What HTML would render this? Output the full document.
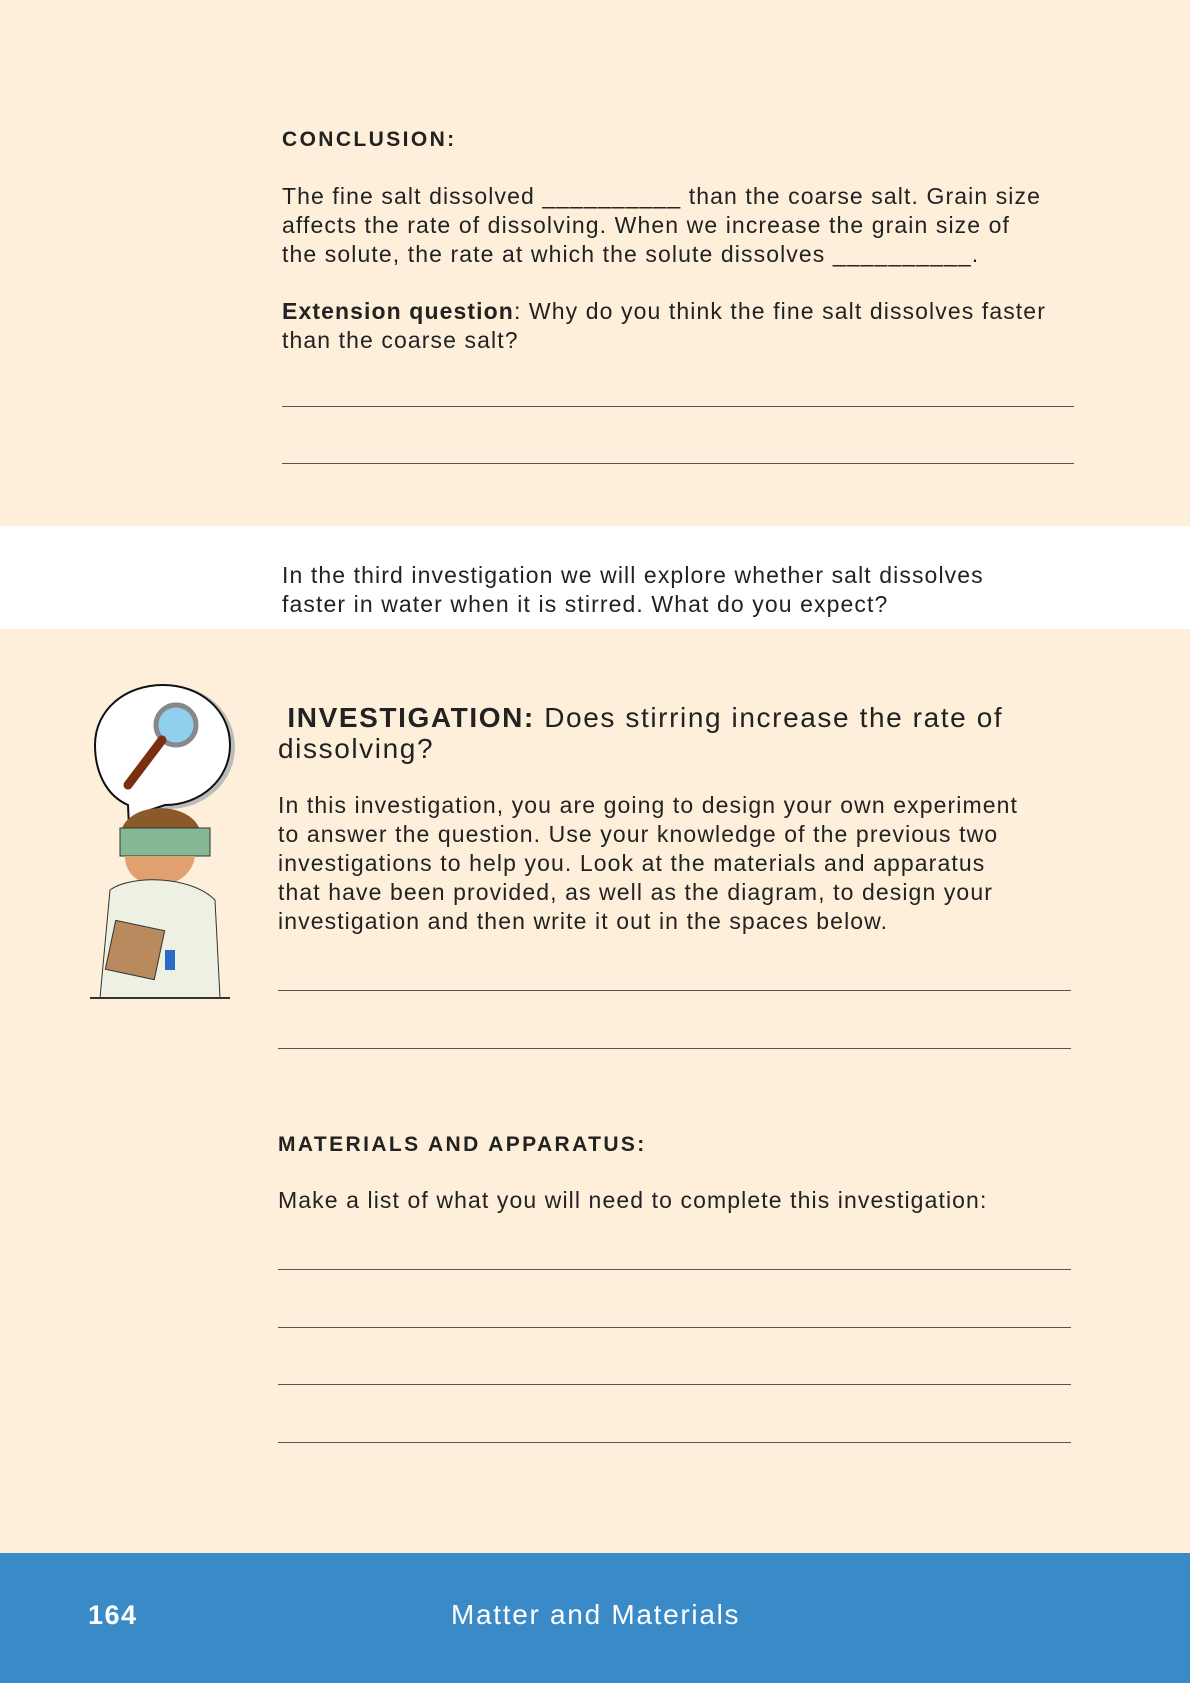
<!DOCTYPE html>
<html><head><meta charset="utf-8"><style>
body{margin:0;width:1190px;height:1683px;background:#fdefd9;position:relative;font-family:"Liberation Sans",sans-serif;color:#222;overflow:hidden}
.t{position:absolute;white-space:nowrap;font-size:23px;line-height:29px;letter-spacing:1.1px}
.b{font-weight:bold}
.l{position:absolute;height:1px;background:#555}
</style></head><body>
<div style="position:absolute;left:0;top:526px;width:1190px;height:103px;background:#fff"></div>
<div class="t b" style="left:282px;top:125px;font-size:21px;letter-spacing:2.4px">CONCLUSION:</div>
<div class="t" style="left:282px;top:182px">The fine salt dissolved __________ than the coarse salt. Grain size<br>affects the rate of dissolving. When we increase the grain size of<br>the solute, the rate at which the solute dissolves __________.</div>
<div class="t" style="left:282px;top:297px"><b>Extension question</b>: Why do you think the fine salt dissolves faster<br>than the coarse salt?</div>
<div class="l" style="left:282px;width:792px;top:406px"></div>
<div class="l" style="left:282px;width:792px;top:463px"></div>
<div class="t" style="left:282px;top:561px">In the third investigation we will explore whether salt dissolves<br>faster in water when it is stirred. What do you expect?</div>
<div class="t" style="left:278px;top:702px;font-size:28px;line-height:31px;letter-spacing:1.6px">&nbsp;<b>INVESTIGATION:</b> Does stirring increase the rate of<br>dissolving?</div>
<div class="t" style="left:278px;top:791px">In this investigation, you are going to design your own experiment<br>to answer the question. Use your knowledge of the previous two<br>investigations to help you. Look at the materials and apparatus<br>that have been provided, as well as the diagram, to design your<br>investigation and then write it out in the spaces below.</div>
<div class="l" style="left:278px;width:793px;top:990px"></div>
<div class="l" style="left:278px;width:793px;top:1048px"></div>
<div class="t b" style="left:278px;top:1130px;font-size:21px;letter-spacing:2.4px">MATERIALS AND APPARATUS:</div>
<div class="t" style="left:278px;top:1186px">Make a list of what you will need to complete this investigation:</div>
<div class="l" style="left:278px;width:793px;top:1269px"></div>
<div class="l" style="left:278px;width:793px;top:1327px"></div>
<div class="l" style="left:278px;width:793px;top:1384px"></div>
<div class="l" style="left:278px;width:793px;top:1442px"></div>
<svg style="position:absolute;left:90px;top:680px" width="150" height="320" viewBox="0 0 150 320">
<ellipse cx="79" cy="67" rx="66" ry="62" fill="#bbb"/>
<path d="M73 5 C110 5 140 30 140 65 C140 100 110 125 75 125 L60 130 L40 170 L38 125 C15 115 5 90 5 65 C5 30 35 5 73 5Z" fill="#fff" stroke="#111" stroke-width="2"/>
<circle cx="86" cy="45" r="20" fill="#8fd0ee" stroke="#888" stroke-width="5"/>
<path d="M72 60 L38 105" stroke="#7a3010" stroke-width="9" stroke-linecap="round"/>
<path d="M30 155 C35 120 100 120 110 150 L110 175 L30 175Z" fill="#8a5a2a"/>
<rect x="30" y="148" width="90" height="28" fill="#86b896" stroke="#333"/>
<path d="M35 176 C35 215 100 215 105 176Z" fill="#e0a070"/>
<path d="M20 210 C40 195 100 195 125 220 L130 318 L10 318Z" fill="#eef0e4" stroke="#333"/>
<rect x="20" y="245" width="50" height="50" fill="#b88a5e" stroke="#333" transform="rotate(12 45 270)"/>
<rect x="75" y="270" width="10" height="20" fill="#2a6ac8"/>
<line x1="0" y1="318" x2="140" y2="318" stroke="#333" stroke-width="2"/>
</svg>
<div style="position:absolute;left:0;top:1553px;width:1190px;height:130px;background:#3a8ac8"></div>
<div class="t b" style="left:88px;top:1599px;color:#fff;font-size:27px;line-height:32px;letter-spacing:1.5px">164</div>
<div class="t" style="left:451px;top:1599px;color:#fff;font-size:28px;line-height:32px;letter-spacing:1.7px">Matter and Materials</div>
</body></html>
